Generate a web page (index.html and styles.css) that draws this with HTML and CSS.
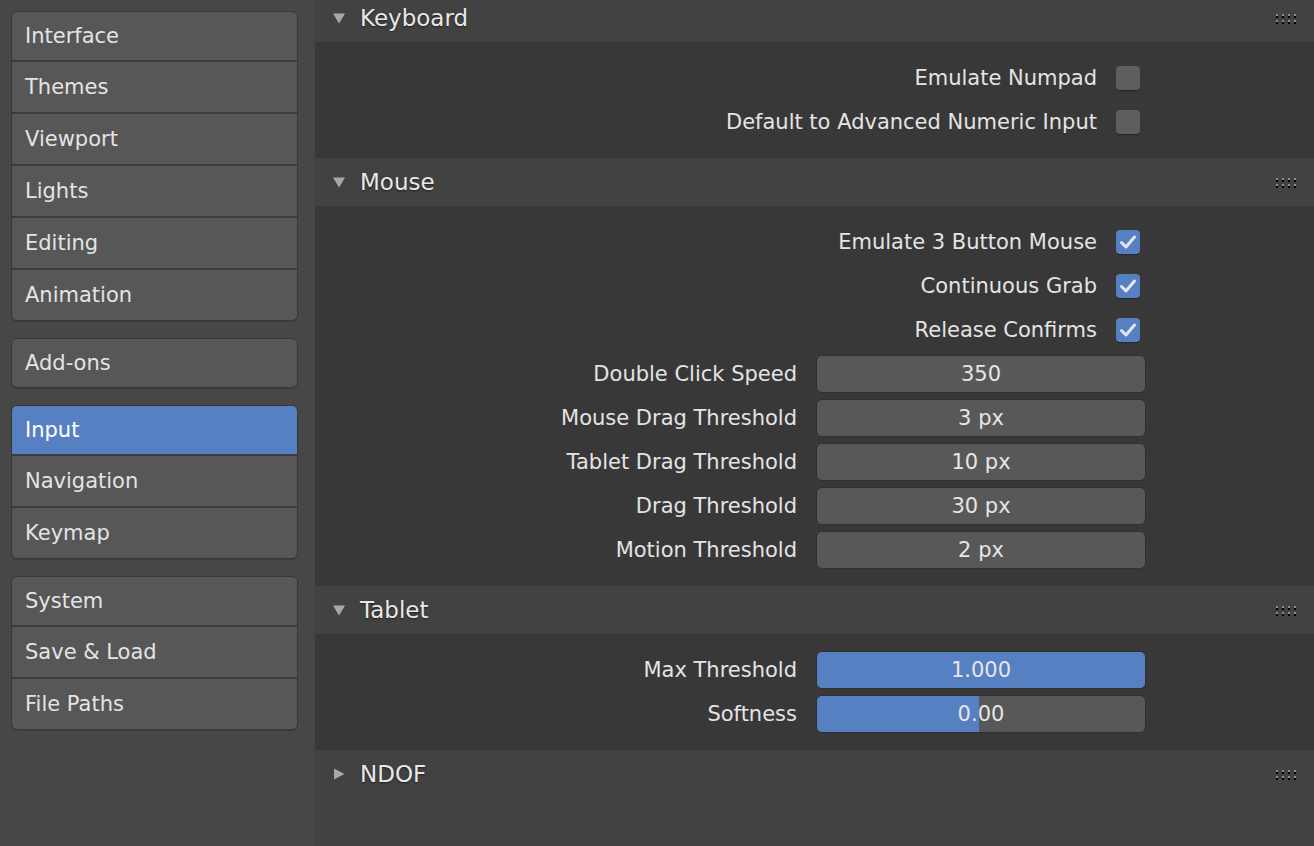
FILE: index.html
```html
<!DOCTYPE html>
<html lang="en">
<head>
<meta charset="utf-8">
<title>Preferences - Input</title>
<link rel="stylesheet" href="styles.css">
</head>
<body>
<div class="app">
  <nav class="sidebar">
    <div class="group">
      <div class="item">Interface</div>
      <div class="item">Themes</div>
      <div class="item">Viewport</div>
      <div class="item">Lights</div>
      <div class="item">Editing</div>
      <div class="item">Animation</div>
    </div>
    <div class="group">
      <div class="item">Add-ons</div>
    </div>
    <div class="group">
      <div class="item active">Input</div>
      <div class="item">Navigation</div>
      <div class="item">Keymap</div>
    </div>
    <div class="group">
      <div class="item">System</div>
      <div class="item">Save &amp; Load</div>
      <div class="item">File Paths</div>
    </div>
  </nav>

  <main class="main">
    <div class="panels">
      <section class="panel">
        <header class="panel-head">
          <svg class="tri" viewBox="0 0 12 12"><polygon points="0,1.5 12,1.5 6,11.5"/></svg>
          <span class="title">Keyboard</span>
          <svg class="grip" viewBox="0 0 20 10"><g class="g-dark"><rect x="0" y="2" width="2" height="2"/><rect x="6" y="2" width="2" height="2"/><rect x="12" y="2" width="2" height="2"/><rect x="18" y="2" width="2" height="2"/><rect x="0" y="8" width="2" height="2"/><rect x="6" y="8" width="2" height="2"/><rect x="12" y="8" width="2" height="2"/><rect x="18" y="8" width="2" height="2"/></g><g class="g-light"><rect x="0" y="0" width="2" height="2"/><rect x="6" y="0" width="2" height="2"/><rect x="12" y="0" width="2" height="2"/><rect x="18" y="0" width="2" height="2"/><rect x="0" y="6" width="2" height="2"/><rect x="6" y="6" width="2" height="2"/><rect x="12" y="6" width="2" height="2"/><rect x="18" y="6" width="2" height="2"/></g></svg>
        </header>
        <div class="panel-body">
          <div class="row check-row"><span class="label">Emulate Numpad</span><span class="checkbox"></span></div>
          <div class="row check-row"><span class="label">Default to Advanced Numeric Input</span><span class="checkbox"></span></div>
        </div>
      </section>

      <section class="panel">
        <header class="panel-head">
          <svg class="tri" viewBox="0 0 12 12"><polygon points="0,1.5 12,1.5 6,11.5"/></svg>
          <span class="title">Mouse</span>
          <svg class="grip" viewBox="0 0 20 10"><g class="g-dark"><rect x="0" y="2" width="2" height="2"/><rect x="6" y="2" width="2" height="2"/><rect x="12" y="2" width="2" height="2"/><rect x="18" y="2" width="2" height="2"/><rect x="0" y="8" width="2" height="2"/><rect x="6" y="8" width="2" height="2"/><rect x="12" y="8" width="2" height="2"/><rect x="18" y="8" width="2" height="2"/></g><g class="g-light"><rect x="0" y="0" width="2" height="2"/><rect x="6" y="0" width="2" height="2"/><rect x="12" y="0" width="2" height="2"/><rect x="18" y="0" width="2" height="2"/><rect x="0" y="6" width="2" height="2"/><rect x="6" y="6" width="2" height="2"/><rect x="12" y="6" width="2" height="2"/><rect x="18" y="6" width="2" height="2"/></g></svg>
        </header>
        <div class="panel-body">
          <div class="row check-row"><span class="label">Emulate 3 Button Mouse</span><span class="checkbox on"><svg viewBox="0 0 24 24"><path d="M5.5 12.5 L10 17 L18.5 7"/></svg></span></div>
          <div class="row check-row"><span class="label">Continuous Grab</span><span class="checkbox on"><svg viewBox="0 0 24 24"><path d="M5.5 12.5 L10 17 L18.5 7"/></svg></span></div>
          <div class="row check-row"><span class="label">Release Confirms</span><span class="checkbox on"><svg viewBox="0 0 24 24"><path d="M5.5 12.5 L10 17 L18.5 7"/></svg></span></div>
          <div class="row prop-row"><span class="label">Double Click Speed</span><span class="field"><span class="value">350</span></span></div>
          <div class="row prop-row"><span class="label">Mouse Drag Threshold</span><span class="field"><span class="value">3 px</span></span></div>
          <div class="row prop-row"><span class="label">Tablet Drag Threshold</span><span class="field"><span class="value">10 px</span></span></div>
          <div class="row prop-row"><span class="label">Drag Threshold</span><span class="field"><span class="value">30 px</span></span></div>
          <div class="row prop-row"><span class="label">Motion Threshold</span><span class="field"><span class="value">2 px</span></span></div>
        </div>
      </section>

      <section class="panel">
        <header class="panel-head">
          <svg class="tri" viewBox="0 0 12 12"><polygon points="0,1.5 12,1.5 6,11.5"/></svg>
          <span class="title">Tablet</span>
          <svg class="grip" viewBox="0 0 20 10"><g class="g-dark"><rect x="0" y="2" width="2" height="2"/><rect x="6" y="2" width="2" height="2"/><rect x="12" y="2" width="2" height="2"/><rect x="18" y="2" width="2" height="2"/><rect x="0" y="8" width="2" height="2"/><rect x="6" y="8" width="2" height="2"/><rect x="12" y="8" width="2" height="2"/><rect x="18" y="8" width="2" height="2"/></g><g class="g-light"><rect x="0" y="0" width="2" height="2"/><rect x="6" y="0" width="2" height="2"/><rect x="12" y="0" width="2" height="2"/><rect x="18" y="0" width="2" height="2"/><rect x="0" y="6" width="2" height="2"/><rect x="6" y="6" width="2" height="2"/><rect x="12" y="6" width="2" height="2"/><rect x="18" y="6" width="2" height="2"/></g></svg>
        </header>
        <div class="panel-body">
          <div class="row prop-row"><span class="label">Max Threshold</span><span class="field"><span class="fill" style="width:100%"></span><span class="value">1.000</span></span></div>
          <div class="row prop-row"><span class="label">Softness</span><span class="field"><span class="fill" style="width:49.4%"></span><span class="value">0.00</span></span></div>
        </div>
      </section>

      <section class="panel">
        <header class="panel-head">
          <svg class="tri" viewBox="0 0 12 12"><polygon points="1,0.5 1,11.5 11.5,6"/></svg>
          <span class="title">NDOF</span>
          <svg class="grip" viewBox="0 0 20 10"><g class="g-dark"><rect x="0" y="2" width="2" height="2"/><rect x="6" y="2" width="2" height="2"/><rect x="12" y="2" width="2" height="2"/><rect x="18" y="2" width="2" height="2"/><rect x="0" y="8" width="2" height="2"/><rect x="6" y="8" width="2" height="2"/><rect x="12" y="8" width="2" height="2"/><rect x="18" y="8" width="2" height="2"/></g><g class="g-light"><rect x="0" y="0" width="2" height="2"/><rect x="6" y="0" width="2" height="2"/><rect x="12" y="0" width="2" height="2"/><rect x="18" y="0" width="2" height="2"/><rect x="0" y="6" width="2" height="2"/><rect x="6" y="6" width="2" height="2"/><rect x="12" y="6" width="2" height="2"/><rect x="18" y="6" width="2" height="2"/></g></svg>
        </header>
      </section>
    </div>
  </main>
</div>
</body>
</html>
```

FILE: styles.css
```css
html, body {
  margin: 0;
  padding: 0;
}

body {
  width: 1314px;
  height: 846px;
  overflow: hidden;
  background: #474747;
  font-family: "DejaVu Sans", "Noto Sans", sans-serif;
  font-size: 21px;
  color: #e4e4e4;
}

.app {
  display: flex;
  height: 846px;
}

/* ---------- sidebar ---------- */
.sidebar {
  width: 315px;
  flex: none;
  box-sizing: border-box;
  padding: 11px 17px 0 11px;
  background: #474747;
}

.group {
  background: #575757;
  border: 1px solid #383838;
  border-radius: 6px;
  overflow: hidden;
  margin-bottom: 17px;
  box-shadow: 0 1px 1px rgba(0, 0, 0, 0.15);
}

.item {
  height: 48px;
  display: flex;
  align-items: center;
  padding-left: 13px;
  padding-bottom: 1px;
  box-sizing: border-box;
}

.item + .item {
  border-top: 2px solid #3c3c3c;
  height: 52px;
}

.item.active {
  background: #5680c2;
  color: #ffffff;
}

/* ---------- main ---------- */
.main {
  flex: 1;
  background: #424242;
  overflow: hidden;
}

.panels {
  margin-top: -6px;
}

.panel-head {
  height: 48px;
  display: flex;
  align-items: center;
  padding: 0 18px;
  background: #424242;
}

.tri {
  width: 12px;
  height: 12px;
  margin-right: 15px;
  fill: #a8a8a8;
  flex: none;
}

.title {
  flex: 1;
  font-size: 23px;
  color: #e8e8e8;
  text-shadow: 0 1px 2px rgba(0, 0, 0, 0.55);
}

.grip {
  width: 20px;
  height: 10px;
  flex: none;
  margin-top: 2px;
}

.g-light {
  fill: #8e8e8e;
}

.g-dark {
  fill: #000000;
}

.panel-body {
  background: #383838;
  padding: 14px 0 14px;
}

.row {
  height: 44px;
  display: flex;
  align-items: center;
}

.check-row {
  justify-content: flex-end;
  gap: 19px;
  padding-right: 174px;
}

.prop-row {
  display: grid;
  grid-template-columns: 1fr 330px;
  column-gap: 19px;
  align-items: center;
  padding-right: 168px;
}

.prop-row .label {
  text-align: right;
}

.checkbox {
  width: 24px;
  height: 24px;
  border-radius: 4px;
  background: #5e5e5e;
  box-shadow: 0 1px 1px rgba(0, 0, 0, 0.35);
  display: flex;
}

.checkbox.on {
  background: #5680c2;
}

.checkbox svg {
  width: 24px;
  height: 24px;
  fill: none;
  stroke: #e2e6ee;
  stroke-width: 3;
  stroke-linecap: round;
  stroke-linejoin: round;
}

.field {
  position: relative;
  box-sizing: border-box;
  height: 38px;
  border: 1px solid #303030;
  border-radius: 6px;
  background: #585858;
  overflow: hidden;
  display: flex;
  align-items: center;
  justify-content: center;
}

.fill {
  position: absolute;
  left: 0;
  top: 0;
  bottom: 0;
  background: #5680c2;
}

.value {
  position: relative;
  color: #e6e6e6;
}
```
